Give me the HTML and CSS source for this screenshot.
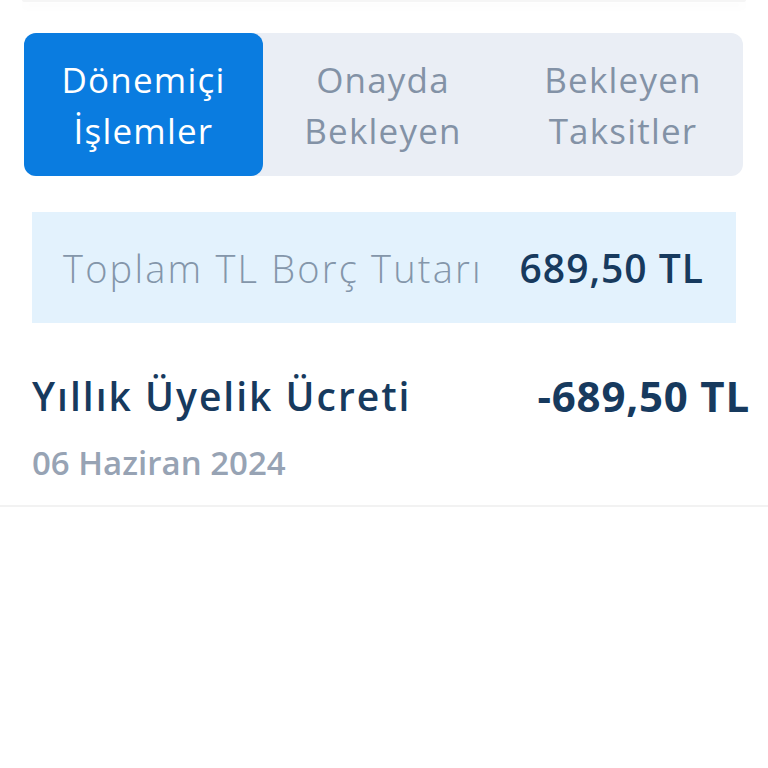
FILE: index.html
```html
<!DOCTYPE html>
<html lang="tr">
<head>
    <meta charset="UTF-8">
    <meta name="viewport" content="width=device-width, initial-scale=1.0">
    <title>Kart Hareketleri</title>
    <link rel="stylesheet" href="styles.css">
</head>
<body>
    <div class="top-card"></div>

    <div class="tabs">
        <div class="tab active">Dönemiçi<br>İşlemler</div>
        <div class="tab">Onayda<br>Bekleyen</div>
        <div class="tab">Bekleyen<br>Taksitler</div>
    </div>

    <div class="summary">
        <span class="summary-label">Toplam TL Borç Tutarı</span>
        <span class="summary-value">689,50 TL</span>
    </div>

    <div class="transaction">
        <div class="transaction-row">
            <div class="transaction-title">Yıllık Üyelik Ücreti</div>
            <div class="transaction-amount">-689,50 TL</div>
        </div>
        <div class="transaction-date">06 Haziran 2024</div>
    </div>
</body>
</html>
```

FILE: styles.css
```css
body {
    font-family: "Open Sans", "Noto Sans", sans-serif;
    margin: 0;
    padding: 0;
    background-color: #fff;
}
.top-card {
    height: 2px;
    margin: 0 22px;
    background-color: #f5f5f5;
    border-radius: 0 0 12px 12px;
    box-shadow: 0 4px 10px rgba(0,0,0,0.05);
}
.tabs {
    display: grid;
    grid-template-columns: 239px 1fr 1fr;
    margin: 31px 25px 0 24px;
    height: 143px;
    background-color: #eaeef5;
    border-radius: 12px;
}
.tab {
    display: flex;
    align-items: center;
    justify-content: center;
    text-align: center;
    font-size: 35px;
    line-height: 51px;
    letter-spacing: 1.2px;
    color: #8392a6;
}
.tab.active {
    background-color: #0a7ce0;
    color: #fff;
    border-radius: 12px;
}
.summary {
    display: flex;
    justify-content: space-between;
    align-items: center;
    margin: 36px 32px 0 32px;
    height: 111px;
    padding: 0 32px 0 31px;
    background-color: #e3f2fd;
}
.summary-label {
    font-size: 38px;
    font-weight: 300;
    letter-spacing: 2.2px;
    color: #8496aa;
}
.summary-value {
    font-size: 39px;
    font-weight: 600;
    letter-spacing: 1px;
    color: #173a5e;
}
.transaction {
    padding: 44px 18px 0 32px;
    height: 138px;
    border-bottom: 2px solid #f2f2f2;
}
.transaction-row {
    display: flex;
    justify-content: space-between;
    align-items: center;
}
.transaction-title {
    font-size: 39px;
    font-weight: 600;
    letter-spacing: 2px;
    color: #173a5e;
}
.transaction-amount {
    font-size: 42px;
    font-weight: 700;
    letter-spacing: 0.8px;
    color: #173a5e;
}
.transaction-date {
    margin-top: 16px;
    font-size: 33px;
    font-weight: 600;
    color: #97a3b4;
}
```
